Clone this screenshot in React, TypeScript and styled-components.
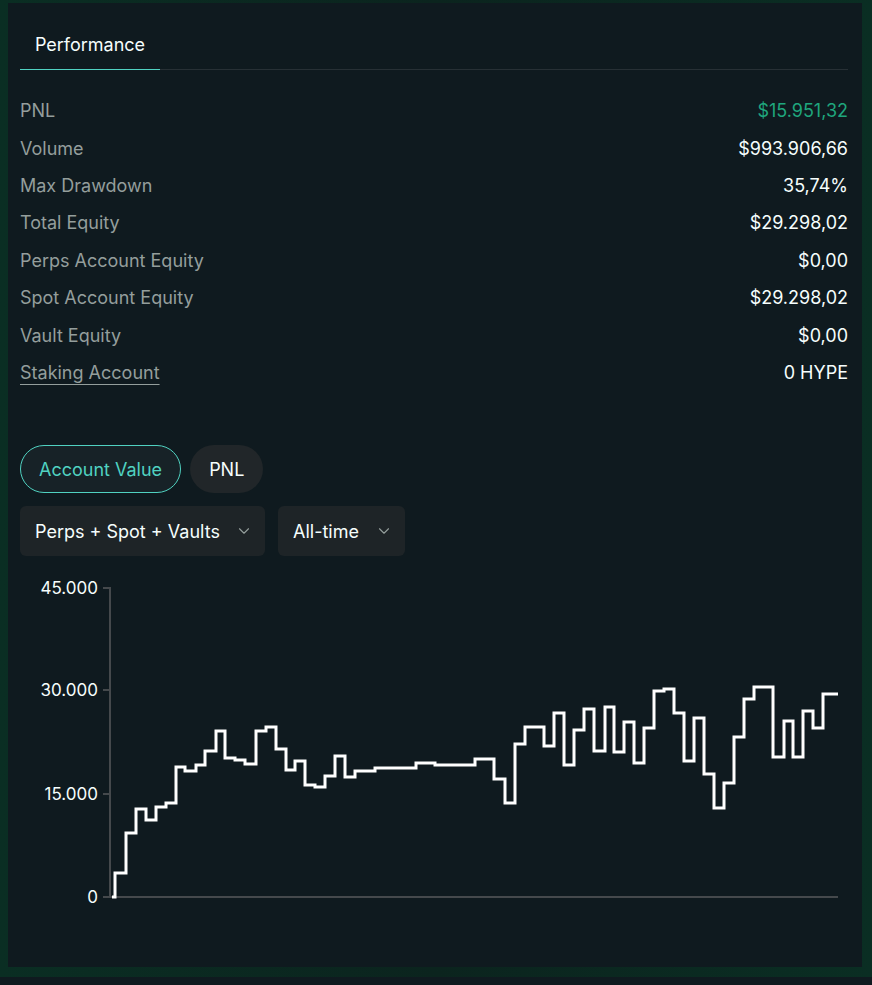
import styled, { createGlobalStyle } from "styled-components";
import { ChevronDown } from "lucide-react";

const GlobalStyle = createGlobalStyle`
    html, body {
        margin: 0;
        padding: 0;
        background: #0b2820;
    }
    * {
        box-sizing: border-box;
    }
`;

const Page = styled.div`
    width: 872px;
    height: 985px;
    display: flex;
    flex-direction: column;
    background: linear-gradient(90deg, #0a2e23 0%, #0b241e 50%, #0a2e23 100%);
    font-family: Inter, "Noto Sans", sans-serif;
    overflow: hidden;
`;

const Panel = styled.div`
    width: 854px;
    height: 964px;
    margin: 3px 0 0 8px;
    padding: 0 14px 0 12px;
    background: #0f1a1f;
    display: flex;
    flex-direction: column;
`;

const Footer = styled.div`
    margin-top: auto;
    height: 8px;
    background: #0f1a1f;
`;

const TabBar = styled.div`
    display: flex;
    padding-top: 19px;
    border-bottom: 1px solid #273035;
`;

const Tab = styled.div<{ $active?: boolean }>`
    width: 140px;
    height: 48px;
    padding-bottom: 2px;
    display: flex;
    align-items: center;
    justify-content: center;
    font-size: 18px;
    color: #f6fefd;
    margin-bottom: -1px;
    border-bottom: 1px solid ${(p) => (p.$active ? "#50d2c1" : "transparent")};
`;

const Stats = styled.div`
    margin-top: 22px;
    display: flex;
    flex-direction: column;
`;

const Row = styled.div`
    height: 37.4px;
    display: flex;
    align-items: center;
    justify-content: space-between;
    font-size: 18px;
`;

const Label = styled.span<{ $link?: boolean }>`
    color: #949e9c;
    text-decoration: ${(p) => (p.$link ? "underline" : "none")};
    text-underline-offset: 5px;
    text-decoration-thickness: 1px;
`;

const Value = styled.span<{ $positive?: boolean }>`
    color: ${(p) => (p.$positive ? "#1fa67d" : "#f6fefd")};
`;

const ToggleGroup = styled.div`
    margin-top: 54px;
    display: flex;
    gap: 9px;
`;

const Pill = styled.button<{ $active?: boolean }>`
    height: 48px;
    padding: 0 18px;
    border-radius: 24px;
    font-family: inherit;
    font-size: 18px;
    cursor: pointer;
    border: 1px solid ${(p) => (p.$active ? "#50d2c1" : "transparent")};
    background: ${(p) => (p.$active ? "#172227" : "#212629")};
    color: ${(p) => (p.$active ? "#50d2c1" : "#f6fefd")};
`;

const Filters = styled.div`
    margin-top: 13px;
    display: flex;
    gap: 13px;
`;

const Select = styled.div<{ $width: number }>`
    width: ${(p) => p.$width}px;
    height: 50px;
    padding: 0 12px 0 15px;
    border-radius: 6px;
    background: #1e2427;
    display: flex;
    align-items: center;
    justify-content: space-between;
    font-size: 18px;
    color: #f6fefd;

    svg {
        color: #949e9c;
    }
`;

const ChartWrap = styled.div`
    margin-top: 14px;
    width: 828px;
    height: 370px;
`;

const stats = [
    { label: "PNL", value: "$15.951,32", positive: true },
    { label: "Volume", value: "$993.906,66" },
    { label: "Max Drawdown", value: "35,74%" },
    { label: "Total Equity", value: "$29.298,02" },
    { label: "Perps Account Equity", value: "$0,00" },
    { label: "Spot Account Equity", value: "$29.298,02" },
    { label: "Vault Equity", value: "$0,00" },
    { label: "Staking Account", value: "0 HYPE", link: true },
];

// [y, xEnd] of every flat step, in page pixels
const steps: [number, number][] = [
    [897, 115], [873, 126], [833, 136], [809, 146], [820, 156], [807, 166],
    [803, 176], [767, 185], [771, 196], [765, 205], [751, 216], [731, 225],
    [758, 235], [760, 245], [764, 256], [731, 266], [727, 276], [749, 286],
    [770, 295], [761, 305], [785, 315], [787, 325], [776, 335], [756, 345],
    [777, 355], [771, 375], [768, 416], [763, 435], [765, 475], [759, 494],
    [779, 505], [803, 515], [744, 525], [727, 544], [746, 554], [713, 564],
    [765, 574], [730, 584], [709, 594], [751, 605], [707, 614], [752, 624],
    [722, 634], [763, 644], [728, 654], [691, 664], [689, 674], [713, 684],
    [761, 694], [718, 704], [774, 714], [808, 724], [783, 734], [737, 744],
    [699, 754], [687, 773], [757, 784], [721, 793], [757, 803], [711, 813],
    [728, 823], [694, 838],
];

function stepPath() {
    let d = `M112 ${steps[0][0]}`;
    steps.forEach(([y, x], i) => {
        if (i > 0) d += ` V${y}`;
        d += ` H${x}`;
    });
    return d;
}

const ticks = [
    { y: 588, label: "45.000" },
    { y: 690, label: "30.000" },
    { y: 794, label: "15.000" },
    { y: 897, label: "0" },
];

function Chart() {
    return (
        <ChartWrap>
            <svg width="828" height="370" viewBox="20 570 828 370">
                <line x1="110" y1="587" x2="110" y2="898" stroke="#45494c" strokeWidth="2" />
                <line x1="110" y1="897" x2="838" y2="897" stroke="#45494c" strokeWidth="2" />
                {ticks.map((t) => (
                    <g key={t.label}>
                        <line x1="103" y1={t.y} x2="110" y2={t.y} stroke="#45494c" strokeWidth="2" />
                        <text
                            x="98"
                            y={t.y}
                            textAnchor="end"
                            dominantBaseline="central"
                            fill="#f6fefd"
                            fontSize="17"
                            fontFamily="Inter, sans-serif"
                        >
                            {t.label}
                        </text>
                    </g>
                ))}
                <path d={stepPath()} fill="none" stroke="#ffffff" strokeWidth="3" />
            </svg>
        </ChartWrap>
    );
}

export default function App() {
    return (
        <Page>
            <GlobalStyle />
            <Panel>
                <TabBar>
                    <Tab $active>Performance</Tab>
                </TabBar>
                <Stats>
                    {stats.map((s) => (
                        <Row key={s.label}>
                            <Label $link={s.link}>{s.label}</Label>
                            <Value $positive={s.positive}>{s.value}</Value>
                        </Row>
                    ))}
                </Stats>
                <ToggleGroup>
                    <Pill $active>Account Value</Pill>
                    <Pill>PNL</Pill>
                </ToggleGroup>
                <Filters>
                    <Select $width={245}>
                        Perps + Spot + Vaults
                        <ChevronDown size={18} strokeWidth={1.5} />
                    </Select>
                    <Select $width={127}>
                        All-time
                        <ChevronDown size={18} strokeWidth={1.5} />
                    </Select>
                </Filters>
                <Chart />
            </Panel>
            <Footer />
        </Page>
    );
}
